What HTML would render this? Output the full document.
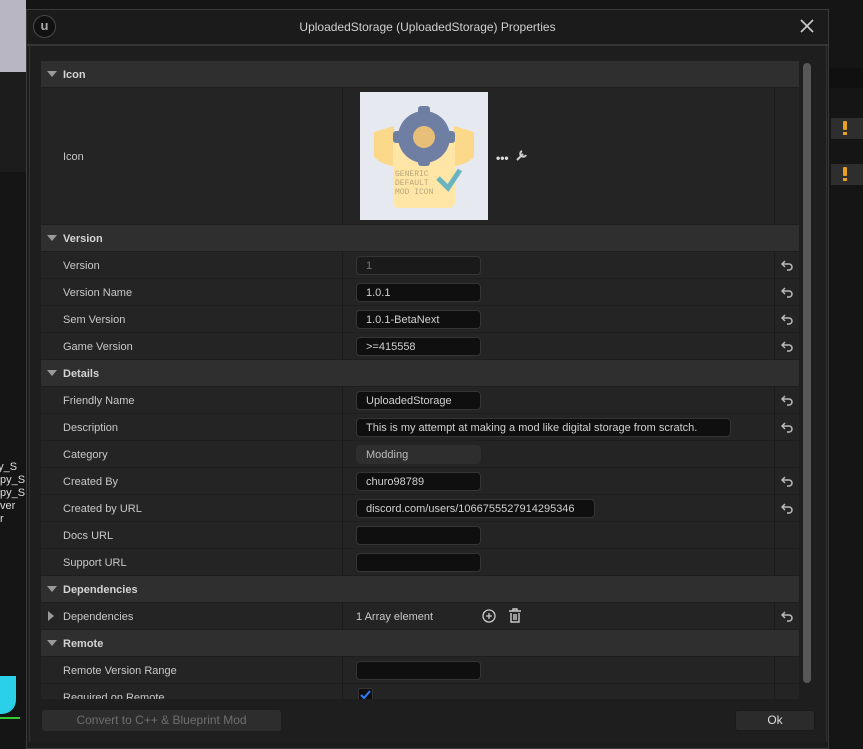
<!DOCTYPE html>
<html><head><meta charset="utf-8"><style>
*{box-sizing:border-box;margin:0;padding:0}
body{width:863px;height:742px;background:#151515;position:relative;overflow:hidden;font-family:"Liberation Sans",sans-serif;font-size:11px;color:#c8c8c8}
.a{position:absolute}
.hdr{position:absolute;left:41px;width:758px;height:26px;background:#2f2f2f;font-weight:bold;color:#d4d4d4;line-height:28px;padding-left:22px}
.hdr:before{content:"";position:absolute;left:6px;top:10px;border-left:5px solid transparent;border-right:5px solid transparent;border-top:6px solid #9a9a9a}
.row{position:absolute;left:41px;width:758px;height:26px;background:#242424;line-height:28px}
.row .l{position:absolute;left:22px;top:0}
.row .d1{position:absolute;left:301px;top:0;width:1px;height:26px;background:#1a1a1a}
.row .d2{position:absolute;left:733px;top:0;width:1px;height:26px;background:#1a1a1a}
.in{position:absolute;left:315px;top:4px;width:125px;height:19px;background:#0f0f0f;border:1px solid #353535;border-radius:4px;line-height:19px;padding-left:9px;color:#d0d0d0;font-size:11px}
.rs{position:absolute;left:740px;top:7px;width:12px;height:12px}
</style></head><body>
<div class="a" style="left:0;top:0;width:26px;height:72px;background:#b7b6c2"></div>
<div class="a" style="left:0;top:72px;width:26px;height:100px;background:#1c1c1c"></div>
<div class="a" style="left:0;top:461px;width:26px;height:80px;font-size:11px;color:#ddd;line-height:13px;text-indent:-8px">py_S<br>py_S<br>py_S<br>ver<br>r</div>
<div class="a" style="left:0;top:676px;width:16px;height:38px;background:#2ad0e8;border-radius:0 0 14px 0"></div>
<div class="a" style="left:0;top:717px;width:20px;height:2px;background:#3c3"></div>
<div class="a" style="left:829px;top:68px;width:34px;height:20px;background:#101010"></div>
<div class="a" style="left:831px;top:118px;width:32px;height:21px;background:#2e2e2e"></div>
<div class="a" style="left:843px;top:121px;width:4px;height:9px;background:#e8a020;border-radius:1px"></div>
<div class="a" style="left:843px;top:132px;width:4px;height:3px;background:#e8a020"></div>
<div class="a" style="left:831px;top:164px;width:32px;height:21px;background:#2e2e2e"></div>
<div class="a" style="left:843px;top:167px;width:4px;height:9px;background:#e8a020;border-radius:1px"></div>
<div class="a" style="left:843px;top:178px;width:4px;height:3px;background:#e8a020"></div>

<div class="a" style="left:26px;top:9px;width:803px;height:740px;background:#1c1c1c;border:1px solid #3a3a3a"></div>
<div class="a" style="left:27px;top:10px;width:801px;height:34px;background:#1b1b1b;text-align:center;line-height:35px;font-size:12px;color:#d0d0d0">UploadedStorage (UploadedStorage) Properties</div>
<div class="a" style="left:33px;top:15px;width:23px;height:23px;border-radius:50%;background:#111;border:1px solid #4a4a4a;color:#aaa;font-weight:bold;font-size:13px;line-height:20px;text-align:center">u</div>
<svg class="a" style="left:800px;top:19px" width="14" height="14"><path d="M1 1L13 13M13 1L1 13" stroke="#ccc" stroke-width="1.6"/></svg>
<div class="a" style="left:27px;top:44px;width:801px;height:2px;background:#353535"></div>
<div class="a" style="left:29px;top:46px;width:798px;height:696px;background:#1e1e1e;border-left:1px solid #333;border-right:1px solid #333"></div>
<div class="a" style="left:803px;top:63px;width:8px;height:620px;background:#575757;border-radius:4px"></div>

<div class="hdr" style="top:61px">Icon</div>
<div class="row" style="top:88px;height:136px"><div class="l" style="top:55px">Icon</div><div class="d1" style="height:136px"></div><div class="d2" style="height:136px"></div></div>
<div class="a" style="left:360px;top:92px;width:128px;height:128px;background:#e6eaf0"></div>
<svg class="a" style="left:360px;top:92px" width="128" height="128">
<path d="M14 40L34 34V75L20 70L14 65Z" fill="#fbd88a"/><path d="M114 40L94 34V75L108 70L114 65Z" fill="#fbd88a"/>
<rect x="33" y="38" width="62" height="78" rx="6" fill="#ffe6a6"/>
<circle cx="64" cy="45" r="26" fill="#6e7fa3"/>
<g fill="#6e7fa3"><rect x="58" y="14" width="12" height="12" rx="3"/><rect x="58" y="62" width="12" height="12" rx="3"/><rect x="33" y="39" width="12" height="12" rx="3"/><rect x="83" y="39" width="12" height="12" rx="3"/></g>
<circle cx="64" cy="45" r="11" fill="#e8bf78"/>
<text x="35" y="84" font-size="8" fill="#b8a67a" font-family="Liberation Mono">GENERIC</text>
<text x="35" y="93" font-size="8" fill="#b8a67a" font-family="Liberation Mono">DEFAULT</text>
<text x="35" y="102" font-size="8" fill="#b8a67a" font-family="Liberation Mono">MOD ICON</text>
<path d="M78 86L88 96L100 78" stroke="#6ab4c0" stroke-width="5" fill="none"/>
</svg>
<div class="a" style="left:496px;top:151px;color:#ddd;font-weight:bold;font-size:12px">•••</div>
<svg class="a" style="left:515px;top:149px" width="13" height="13"><path d="M2 11L8 5M7 2a3 3 0 1 0 4 4" stroke="#ccc" stroke-width="2" fill="none"/></svg>

<div class="hdr" style="top:225px">Version</div>

<svg width="0" height="0" style="position:absolute"><defs><path id="r" d="M4 2L1 5L4 8M1 5H8a3 3 0 0 1 0 6H6" stroke="#bbb" stroke-width="1.5" fill="none"/></defs></svg>

<div class="row" style="top:252px"><div class="l">Version</div><div class="d1"></div><div class="d2"></div><div class="in" style="background:#1a1a1a;color:#777">1</div><svg class="rs"><use href="#r"/></svg></div>
<div class="row" style="top:279px"><div class="l">Version Name</div><div class="d1"></div><div class="d2"></div><div class="in">1.0.1</div><svg class="rs"><use href="#r"/></svg></div>
<div class="row" style="top:306px"><div class="l">Sem Version</div><div class="d1"></div><div class="d2"></div><div class="in">1.0.1-BetaNext</div><svg class="rs"><use href="#r"/></svg></div>
<div class="row" style="top:333px"><div class="l">Game Version</div><div class="d1"></div><div class="d2"></div><div class="in">&gt;=415558</div><svg class="rs"><use href="#r"/></svg></div>
<div class="hdr" style="top:360px">Details</div>
<div class="row" style="top:387px"><div class="l">Friendly Name</div><div class="d1"></div><div class="d2"></div><div class="in">UploadedStorage</div><svg class="rs"><use href="#r"/></svg></div>
<div class="row" style="top:414px"><div class="l">Description</div><div class="d1"></div><div class="d2"></div><div class="in" style="width:375px">This is my attempt at making a mod like digital storage from scratch.</div><svg class="rs"><use href="#r"/></svg></div>
<div class="row" style="top:441px"><div class="l">Category</div><div class="d1"></div><div class="d2"></div><div class="in" style="background:#2e2e2e;border-color:#2e2e2e;color:#bbb">Modding</div></div>
<div class="row" style="top:468px"><div class="l">Created By</div><div class="d1"></div><div class="d2"></div><div class="in">churo98789</div><svg class="rs"><use href="#r"/></svg></div>
<div class="row" style="top:495px"><div class="l">Created by URL</div><div class="d1"></div><div class="d2"></div><div class="in" style="width:239px">discord.com/users/1066755527914295346</div><svg class="rs"><use href="#r"/></svg></div>
<div class="row" style="top:522px"><div class="l">Docs URL</div><div class="d1"></div><div class="d2"></div><div class="in"></div></div>
<div class="row" style="top:549px"><div class="l">Support URL</div><div class="d1"></div><div class="d2"></div><div class="in"></div></div>
<div class="hdr" style="top:576px">Dependencies</div>
<div class="row" style="top:603px"><div class="a" style="left:7px;top:8px;border-top:5px solid transparent;border-bottom:5px solid transparent;border-left:6px solid #9a9a9a"></div><div class="l">Dependencies</div><div class="d1"></div><div class="d2"></div><div class="a" style="left:315px;top:0">1 Array element</div>
<svg class="a" style="left:441px;top:6px" width="14" height="14"><circle cx="7" cy="7" r="6" stroke="#ccc" stroke-width="1.3" fill="none"/><path d="M7 4V10M4 7H10" stroke="#ccc" stroke-width="1.3"/></svg>
<svg class="a" style="left:467px;top:5px" width="14" height="16"><path d="M1 3H13M5 3V1H9V3M3 5V14H11V5M6 6V12M8 6V12" stroke="#ccc" stroke-width="1.4" fill="none"/></svg>
<svg class="rs"><use href="#r"/></svg></div>
<div class="hdr" style="top:630px">Remote</div>
<div class="row" style="top:657px"><div class="l">Remote Version Range</div><div class="d1"></div><div class="d2"></div><div class="in"></div></div>
<div class="a" style="left:41px;top:684px;width:758px;height:15px;overflow:hidden"><div class="row" style="left:0;top:0"><div class="l">Required on Remote</div><div class="d1"></div><div class="d2"></div><div class="a" style="left:317px;top:4px;width:15px;height:15px;background:#0f0f0f;border:1px solid #353535;border-radius:2px"></div><svg class="a" style="left:318px;top:5px" width="14" height="12"><path d="M2 6L5 9L11 2" stroke="#2a7fff" stroke-width="2" fill="none"/></svg></div></div>

<div class="a" style="left:42px;top:710px;width:239px;height:21px;background:#2d2d2d;border-radius:3px;text-align:center;line-height:21px;color:#6e6e6e;font-size:12px">Convert to C++ &amp; Blueprint Mod</div>
<div class="a" style="left:735px;top:710px;width:80px;height:21px;background:#2b2b2b;border:1px solid #1a1a1a;border-radius:3px;text-align:center;line-height:19px;color:#ddd;font-size:12px">Ok</div>
</body></html>
